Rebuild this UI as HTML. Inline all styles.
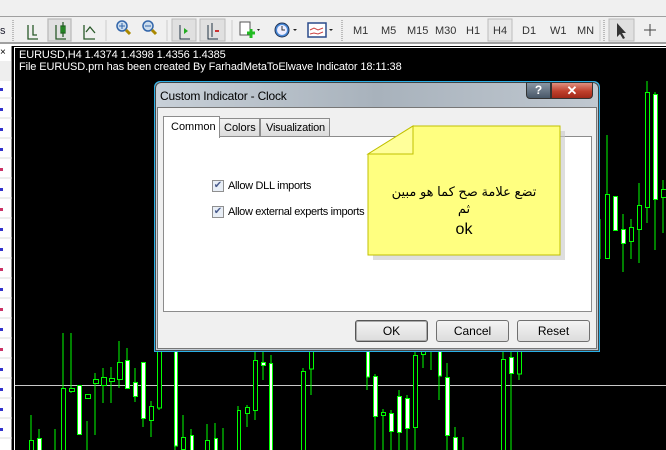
<!DOCTYPE html>
<html><head><meta charset="utf-8"><style>
*{margin:0;padding:0;box-sizing:border-box}
body{width:666px;height:450px;overflow:hidden;position:relative;background:#000;font-family:"Liberation Sans",sans-serif;font-size:11px}
.a{position:absolute}
.tb{color:#333;font-size:11px}
</style></head><body>
<div class="a" style="left:0;top:0;width:666px;height:16px;background:#f0f0f0"></div>
<div class="a" style="left:0;top:16px;width:666px;height:1px;background:#a0a0a0"></div>
<div class="a" style="left:0;top:17px;width:666px;height:27px;background:#f0f0f0;border-bottom:2px solid #a0a0a0"></div>
<div class="a" style="left:0;top:44px;width:666px;height:2px;background:#fff"></div>
<svg class="a" style="left:0;top:17px" width="666" height="27">
<text x="0" y="17" font-size="11" fill="#223">s</text>
<line x1="13" y1="3" x2="13" y2="24" stroke="#bbb" stroke-dasharray="1 1" stroke-width="2"/>
<g stroke="#2a5a2a" fill="none" stroke-width="1.3">
<path d="M28 8v14h10M33 8v10h4"/>
<rect x="48" y="2" width="23" height="22" fill="#e0e0e0" stroke="#bbb"/>
<path d="M56 8v14h10"/><rect x="61" y="9" width="4" height="7" fill="#2c2" stroke="#262"/><path d="M63 5v15"/>
<path d="M84 8v14h11M86 15l4-5 5 6"/>
</g>
<line x1="106" y1="3" x2="106" y2="24" stroke="#ccc"/>
<circle cx="122" cy="9" r="5" fill="#cde" stroke="#36a" stroke-width="1.5"/><path d="M126 13l4 4" stroke="#a80" stroke-width="3"/><path d="M119 9h6M122 6v6" stroke="#36a"/>
<circle cx="148" cy="9" r="5" fill="#cde" stroke="#36a" stroke-width="1.5"/><path d="M152 13l4 4" stroke="#a80" stroke-width="3"/><path d="M145 9h6" stroke="#36a"/>
<line x1="167" y1="3" x2="167" y2="24" stroke="#ccc"/>
<rect x="172" y="2" width="24" height="22" fill="#e0e0e0" stroke="#bbb"/>
<path d="M180 8v14h10" stroke="#234" fill="none"/><path d="M184 11l4 3-4 3z" fill="#2a2"/>
<rect x="200" y="2" width="25" height="22" fill="#e0e0e0" stroke="#bbb"/>
<path d="M208 8v14h10M212 6v14" stroke="#234" fill="none"/><path d="M219 14h-4" stroke="#c33" stroke-width="2"/>
<line x1="232" y1="3" x2="232" y2="24" stroke="#ccc"/>
<rect x="240" y="5" width="10" height="13" fill="#fff" stroke="#555"/><path d="M247 16h8M251 12v9" stroke="#2b2" stroke-width="3"/><path d="M257 12l3 0-1.5 2z" fill="#222"/>
<circle cx="282" cy="13" r="7" fill="#4a8ad8" stroke="#235"/><circle cx="282" cy="13" r="5" fill="#eef"/><path d="M282 9v4h3" stroke="#333" fill="none"/><path d="M293 12h4l-2 2z" fill="#222"/>
<rect x="308" y="6" width="18" height="14" fill="#fff" stroke="#2a4a8a" stroke-width="1.5"/><path d="M310 13l4-2 4 2 5-2M310 17l4-1 4 1 5-2" stroke="#c44" fill="none"/><path d="M329 12h4l-2 2z" fill="#222"/>
<line x1="342" y1="3" x2="342" y2="24" stroke="#bbb" stroke-dasharray="1 1" stroke-width="2"/>
<rect x="488" y="2" width="24" height="22" fill="#e8e8e8" stroke="#bbb"/>
<line x1="600" y1="3" x2="600" y2="24" stroke="#ccc"/>
<line x1="604" y1="3" x2="604" y2="24" stroke="#bbb" stroke-dasharray="1 1" stroke-width="2"/>
<rect x="609" y="2" width="25" height="22" fill="#e0e0e0" stroke="#bbb"/>
<path d="M617 6v14l3-3 3 5 2-1-3-5h4z" fill="#333"/>
<path d="M650 7v12M644 13h12" stroke="#444"/>
</svg>
<div class="a tb" style="left:353px;top:25px">M1</div>
<div class="a tb" style="left:381px;top:25px">M5</div>
<div class="a tb" style="left:407px;top:25px">M15</div>
<div class="a tb" style="left:435px;top:25px">M30</div>
<div class="a tb" style="left:466px;top:25px">H1</div>
<div class="a tb" style="left:493px;top:25px">H4</div>
<div class="a tb" style="left:522px;top:25px">D1</div>
<div class="a tb" style="left:550px;top:25px">W1</div>
<div class="a tb" style="left:577px;top:25px">MN</div>
<div class="a" style="left:0;top:46px;width:12px;height:404px;background:#fff;border-right:1px solid #888"></div>
<svg class="a" style="left:0;top:46px" width="13" height="404">
<text x="0" y="9" font-size="10" fill="#000">×</text>
<rect x="0" y="15" width="11" height="20" fill="#eee"/>
<g fill="#33c">
<rect x="0" y="42" width="3" height="3"/><rect x="0" y="62" width="3" height="3"/><rect x="0" y="82" width="3" height="3"/><rect x="0" y="102" width="3" height="3"/><rect x="0" y="122" width="3" height="3" fill="#c36"/><rect x="0" y="142" width="3" height="3"/><rect x="0" y="162" width="3" height="3" fill="#c36"/><rect x="0" y="182" width="3" height="3"/><rect x="0" y="202" width="3" height="3"/><rect x="0" y="222" width="3" height="3" fill="#c36"/><rect x="0" y="242" width="3" height="3"/><rect x="0" y="262" width="3" height="3" fill="#c36"/><rect x="0" y="282" width="3" height="3"/><rect x="0" y="302" width="3" height="3" fill="#c36"/><rect x="0" y="322" width="3" height="3"/><rect x="0" y="342" width="3" height="3"/><rect x="0" y="362" width="3" height="3"/><rect x="0" y="382" width="3" height="3"/>
</g>
<g stroke="#ddd"><path d="M0 52h12M0 72h12M0 92h12M0 112h12M0 132h12M0 152h12M0 172h12M0 192h12M0 212h12M0 232h12M0 252h12M0 272h12M0 292h12M0 312h12M0 332h12M0 352h12M0 372h12M0 392h12"/></g>
</svg>
<svg class="a" style="left:0;top:0" width="666" height="450">
<rect x="14.5" y="47.5" width="660" height="410" fill="none" stroke="#fff"/>
<line x1="15" y1="385.5" x2="666" y2="385.5" stroke="#c8c8c8"/>
<g stroke="#0f0" stroke-width="1" fill="#000">
<path d="M31 415v35M39 429v21M55 429v21M63 333v117M71 333v60M87 421v29M95 373v62M103 368v35M111 367v36M119 341v47M127 348v20M135 368v34M143 393v34M151 401v36M159 340v70M175 340v110M183 415v35M191 429v21M207 424v26M215 423v27M223 428v22M238 406v44M247 405v22M255 340v80M263 340v40M271 355v95M303 368v82M311 340v55M367 340v50M375 374v80M383 409v41M391 410v40M399 390v60M407 395v55M415 345v105M423 340v28M431 340v30M439 340v60M447 363v100M455 427v23M463 437v13M503 340v110M511 340v110M519 340v40M607 135v124M623 214v58M631 219v40M639 183v80M647 81v142M655 92v158M663 180v53M600 219v40"/>
<rect x="29.5" y="440.5" width="4" height="12"/><rect x="61.5" y="388.5" width="4" height="62"/><rect x="69.5" y="388.5" width="5" height="3"/><rect x="85.5" y="394.5" width="5" height="4"/><rect x="93.5" y="379.5" width="5" height="4"/><rect x="101.5" y="377.5" width="5" height="8"/><rect x="109.5" y="378.5" width="5" height="3"/><rect x="117.5" y="362.5" width="5" height="17"/><rect x="149.5" y="406.5" width="4" height="14"/><rect x="157.5" y="340" width="4" height="68"/><rect x="181.5" y="437.5" width="4" height="12"/><rect x="205.5" y="440.5" width="4" height="12"/><rect x="237.5" y="410.5" width="3" height="42"/><rect x="245.5" y="407.5" width="4" height="6"/><rect x="253.5" y="360.5" width="4" height="50"/><rect x="301.5" y="371.5" width="4" height="80"/><rect x="309.5" y="340" width="4" height="29"/><rect x="381.5" y="412.5" width="4" height="3"/><rect x="413.5" y="355.5" width="4" height="72"/><rect x="421.5" y="351.5" width="4" height="3"/><rect x="501.5" y="359.5" width="4" height="92"/><rect x="517.5" y="340" width="4" height="34"/><rect x="605.5" y="194.5" width="4" height="64"/><rect x="629.5" y="227.5" width="4" height="14"/><rect x="637.5" y="205.5" width="4" height="24"/><rect x="645.5" y="92.5" width="4" height="115"/><rect x="661.5" y="189.5" width="5" height="8"/>
<g fill="#fff"><rect x="37.5" y="438.5" width="4" height="13"/><rect x="77.5" y="385.5" width="4" height="49"/><rect x="125.5" y="360.5" width="4" height="28"/><rect x="133.5" y="382.5" width="4" height="14"/><rect x="141.5" y="362.5" width="4" height="56"/><rect x="174.5" y="340" width="3" height="106"/><rect x="190.5" y="435.5" width="3" height="16"/><rect x="214.5" y="438.5" width="3" height="13"/><rect x="261.5" y="362.5" width="4" height="3"/><rect x="269.5" y="363.5" width="3" height="88"/><rect x="366.5" y="340" width="3" height="37"/><rect x="373.5" y="376.5" width="4" height="40"/><rect x="389.5" y="413.5" width="4" height="18"/><rect x="397.5" y="396.5" width="4" height="36"/><rect x="405.5" y="398.5" width="4" height="30"/><rect x="438.5" y="340" width="3" height="36"/><rect x="445.5" y="377.5" width="4" height="58"/><rect x="453.5" y="437.5" width="4" height="14"/><rect x="509.5" y="357.5" width="4" height="16"/><rect x="613.5" y="196.5" width="4" height="34"/><rect x="621.5" y="229.5" width="4" height="14"/><rect x="653.5" y="94.5" width="4" height="105"/></g>
</g>
<text x="19" y="58" fill="#fff" font-size="11" letter-spacing="-0.1">EURUSD,H4  1.4374 1.4398 1.4356 1.4385</text>
<text x="19" y="70" fill="#fff" font-size="11" letter-spacing="-0.1">File EURUSD.prn has been created By FarhadMetaToElwave Indicator 18:11:38</text>
</svg>
<div class="a" style="left:154px;top:81px;width:446px;height:271px;border:1px solid #2ab0e8;border-radius:6px 6px 0 0;background:#bcc4cc"></div>
<div class="a" style="left:155px;top:82px;width:444px;height:269px;border:1px solid #444;border-radius:6px 6px 0 0;background:linear-gradient(90deg,#c8d0d8,#a8b2bc 50%,#c0c8d0)"></div>
<div class="a" style="left:160px;top:89px;font-size:12px;color:#000;letter-spacing:-0.2px">Custom Indicator - Clock</div>
<div class="a" style="left:526px;top:82px;width:25px;height:17px;background:linear-gradient(#8a96a4,#485868);border:1px solid #333;border-radius:0 0 0 4px;color:#fff;font-weight:bold;text-align:center;font-size:12px;line-height:15px">?</div>
<div class="a" style="left:551px;top:82px;width:42px;height:17px;background:linear-gradient(#e09080,#c0402c 55%,#a02818);border:1px solid #333;border-radius:0 0 4px 0;color:#fff;font-weight:bold;text-align:center;font-size:13px;line-height:15px">✕</div>
<div class="a" style="left:157px;top:107px;width:440px;height:242px;background:#f0f0f0;border:1px solid #777"></div>
<div class="a" style="left:163px;top:136px;width:429px;height:176px;background:#fff;border:1px solid #8c8c8c"></div>
<div class="a" style="left:219px;top:118px;width:41px;height:19px;background:linear-gradient(#f2f2f2,#dcdcdc);border:1px solid #8c8c8c;font-size:11px;padding:3px 0 0 4px">Colors</div>
<div class="a" style="left:260px;top:118px;width:70px;height:19px;background:linear-gradient(#f2f2f2,#dcdcdc);border:1px solid #8c8c8c;font-size:11px;padding:3px 0 0 5px;letter-spacing:-0.2px">Visualization</div>
<div class="a" style="left:163px;top:116px;width:57px;height:22px;background:#fff;border:1px solid #8c8c8c;border-bottom:none;font-size:11px;padding:4px 0 0 7px">Common</div>
<div class="a" style="left:212px;top:180px;width:12px;height:12px;border:1px solid #8f8f8f;background:#e8eef6;color:#4a5c8c;font-size:10px;line-height:10px;text-align:center">✔</div>
<div class="a" style="left:228px;top:180px;font-size:11px;letter-spacing:-0.3px">Allow DLL imports</div>
<div class="a" style="left:212px;top:206px;width:12px;height:12px;border:1px solid #8f8f8f;background:#e8eef6;color:#4a5c8c;font-size:10px;line-height:10px;text-align:center">✔</div>
<div class="a" style="left:228px;top:206px;font-size:11px;letter-spacing:-0.35px">Allow external experts imports</div>
<div class="a" style="left:355px;top:320px;width:73px;height:22px;border:1px solid #555;border-radius:3px;background:linear-gradient(#f4f4f4,#dcdcdc);text-align:center;line-height:20px;font-size:12px;box-shadow:inset 0 0 0 1px #aaa">OK</div>
<div class="a" style="left:436px;top:320px;width:73px;height:22px;border:1px solid #707070;border-radius:3px;background:linear-gradient(#f4f4f4,#dcdcdc);text-align:center;line-height:20px;font-size:12px">Cancel</div>
<div class="a" style="left:517px;top:320px;width:73px;height:22px;border:1px solid #707070;border-radius:3px;background:linear-gradient(#f4f4f4,#dcdcdc);text-align:center;line-height:20px;font-size:12px">Reset</div>
<svg class="a" style="left:360px;top:120px" width="210" height="145">
<polygon points="10,36 53,8 202,8 202,137 10,137" fill="#c8c8c8" opacity="0.6" transform="translate(3,3)"/>
<polygon points="8,34 53,6 200,6 200,135 8,135" fill="#ffff80" stroke="#c0c000"/>
<polygon points="8,34 53,6 53,34" fill="#ffff9a" stroke="#c0c000"/>
</svg>
<div class="a" style="left:368px;top:183px;width:192px;text-align:center;font-family:'Liberation Sans','DejaVu Sans',sans-serif;font-size:13px;line-height:17px;color:#000" dir="rtl">تضع علامة صح كما هو مبين<br>ثم</div>
<div class="a" style="left:368px;top:221px;width:192px;text-align:center;font-size:16px;color:#000">ok</div>
</body></html>
